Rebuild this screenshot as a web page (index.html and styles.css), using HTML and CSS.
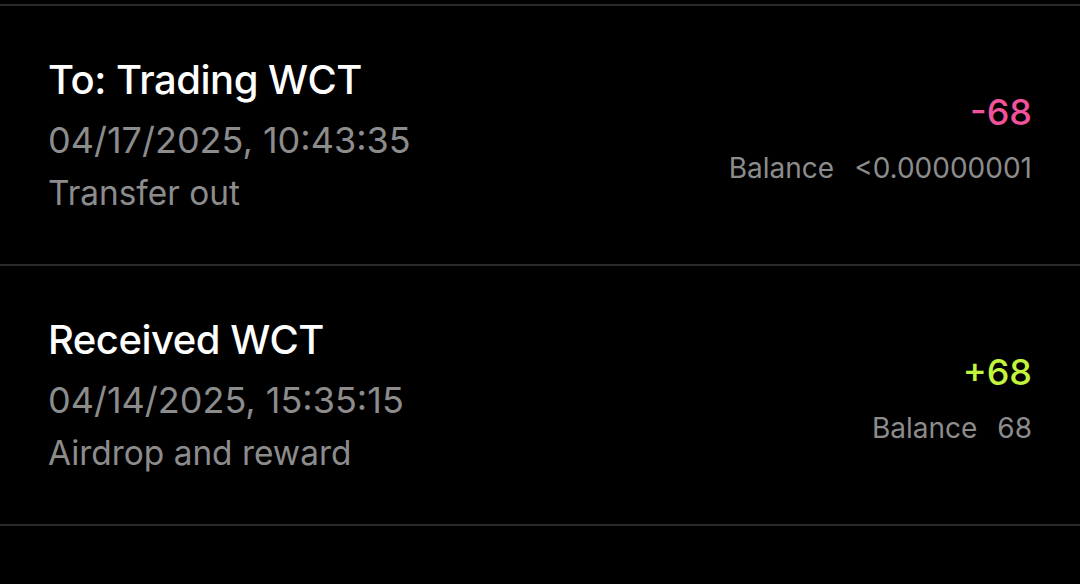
FILE: index.html
```html
<!DOCTYPE html>
<html lang="en">
<head>
<meta charset="utf-8">
<title>WCT history</title>
<link rel="stylesheet" href="styles.css">
</head>
<body>
<div class="list">
  <div class="row">
    <div class="info">
      <div class="title">To: Trading WCT</div>
      <div class="date">04/17/2025, 10:43:35</div>
      <div class="type">Transfer out</div>
    </div>
    <div class="amounts">
      <div class="amount neg">-68</div>
      <div class="balance"><span class="label">Balance</span><span>&lt;0.00000001</span></div>
    </div>
  </div>
  <div class="row">
    <div class="info">
      <div class="title">Received WCT</div>
      <div class="date">04/14/2025, 15:35:15</div>
      <div class="type">Airdrop and reward</div>
    </div>
    <div class="amounts">
      <div class="amount pos">+68</div>
      <div class="balance"><span class="label">Balance</span><span>68</span></div>
    </div>
  </div>
  <div class="row">
    <div class="info">
      <div class="title">Withdraw WCT</div>
    </div>
  </div>
</div>
</body>
</html>
```

FILE: styles.css
```css
html, body {
  margin: 0;
  padding: 0;
  background: #000;
  height: 100%;
  overflow: hidden;
}
body {
  font-family: Inter, "Liberation Sans", sans-serif;
  color: #fff;
}
.list {
  padding-top: 4px;
}
.row {
  border-top: 2px solid #2a2a2a;
  height: 260px;
  box-sizing: border-box;
  padding: 50px 48px 0 48px;
  display: flex;
  justify-content: space-between;
  align-items: flex-start;
}
.info {
  display: flex;
  flex-direction: column;
}
.title {
  font-size: 40px;
  font-weight: 500;
  line-height: 48px;
  letter-spacing: -0.5px;
}
.date {
  font-size: 36px;
  line-height: 56px;
  color: #8c8c8c;
  margin-top: 8px;
}
.type {
  font-size: 33.4px;
  line-height: 50px;
  color: #8c8c8c;
}
.amounts {
  display: flex;
  flex-direction: column;
  align-items: flex-end;
  margin-top: 34px;
}
.amount {
  font-size: 36px;
  font-weight: 500;
  line-height: 44px;
}
.neg { color: #f0529c; }
.pos { color: #c3f53c; }
.balance {
  font-size: 28px;
  line-height: 40px;
  color: #8c8c8c;
  margin-top: 14px;
  display: flex;
  gap: 20px;
}
```
